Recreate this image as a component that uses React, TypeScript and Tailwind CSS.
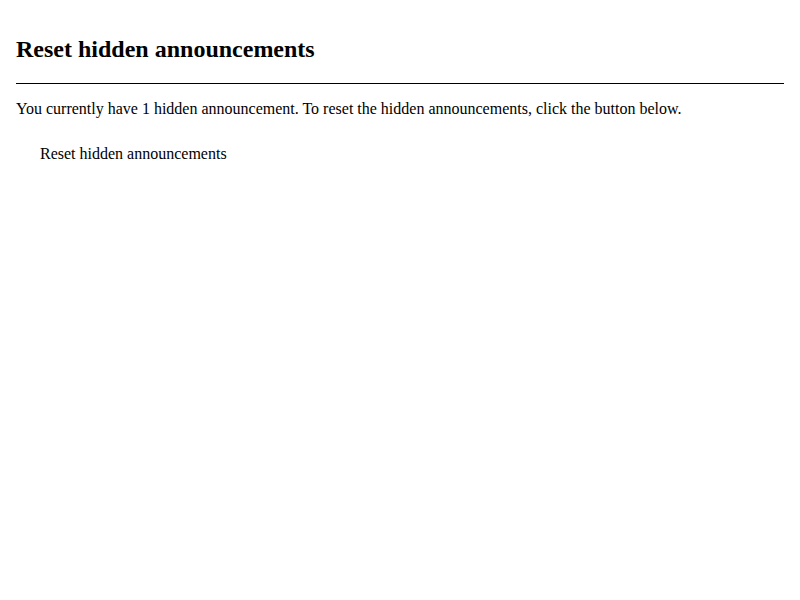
export default function App() {
  return (
    <div className="min-h-[600px] bg-white px-4 text-black">
      <div className="font-['Liberation_Serif',serif]">
        <h2 className="pt-[36px] text-[24px] font-bold leading-[27px]">Reset hidden announcements</h2>
        <hr className="mt-[20px] border-0 border-t border-black" />
        <p className="mt-[16px] text-[16px] leading-[18px]">
          You currently have 1 hidden announcement. To reset the hidden announcements, click the button below.
        </p>
        <button className="mt-[27px] block pl-[24px] text-[16px] leading-[18px]">Reset hidden announcements</button>
      </div>
    </div>
  );
}
